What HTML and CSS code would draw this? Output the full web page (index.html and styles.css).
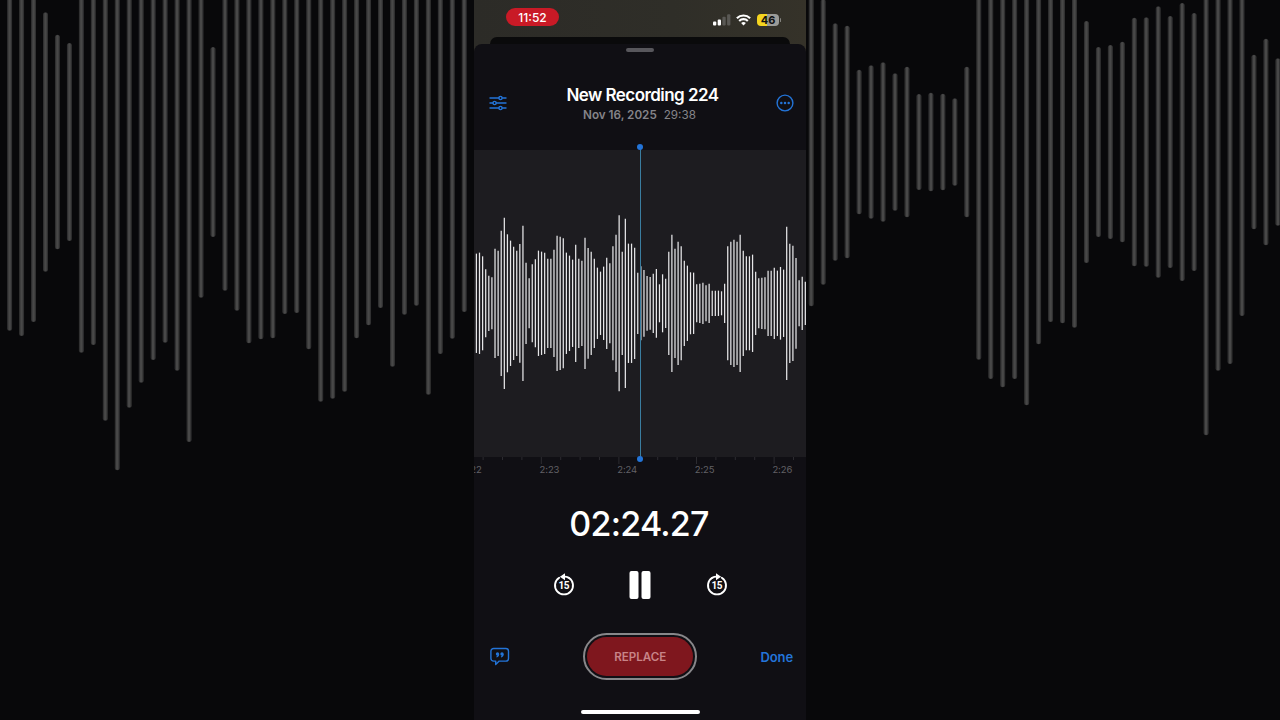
FILE: index.html
```html
<!DOCTYPE html>
<html lang="en">
<head>
  <meta charset="UTF-8" />
  <meta name="viewport" content="width=device-width, initial-scale=1.0" />
  <title>New Recording 224</title>
  <link rel="stylesheet" href="styles.css">
</head>
<body>
  <svg class="backdrop" id="backdrop" width="1280" height="720"></svg>

  <main class="phone">
    <header class="status-bar">
      <div class="clock">11:52</div>
      <div class="status-icons">
        <svg class="signal" width="18" height="12" viewBox="0 0 18 12">
          <rect x="0" y="7.5" width="3.3" height="4" rx="1" fill="#fff" />
          <rect x="4.7" y="5.5" width="3.3" height="6" rx="1" fill="#fff" />
          <rect x="9.4" y="2.8" width="3.3" height="8.7" rx="1" fill="#5a5955" />
          <rect x="14.1" y="0.3" width="3.3" height="11.2" rx="1" fill="#5a5955" />
        </svg>
        <svg class="wifi" width="15" height="12" viewBox="0 0 15 12">
          <path d="M0.9 4.2a9.4 9.4 0 0 1 13.2 0" fill="none" stroke="#fff" stroke-width="2.2" />
          <path d="M3.2 6.9a6.1 6.1 0 0 1 8.6 0" fill="none" stroke="#fff" stroke-width="2.1" />
          <path d="M5.1 9.1a3.4 3.4 0 0 1 4.8 0L7.5 11.6z" fill="#fff" />
        </svg>
        <div class="battery">46</div>
      </div>
    </header>

    <div class="sheet-behind"></div>

    <section class="sheet">
      <div class="grabber"></div>

      <div class="title-row">
        <svg width="18" height="16" viewBox="0 0 18 16" class="icon">
          <path d="M1 3h8.8M13.2 3H17M1 8h2.9M7.3 8H17M1 13h8.8M13.2 13H17" />
          <circle cx="11.5" cy="3" r="1.6" />
          <circle cx="5.6" cy="8" r="1.6" />
          <circle cx="11.5" cy="13" r="1.6" />
        </svg>
        <div class="title">
          <h1>New Recording 224</h1>
          <p><b>Nov 16, 2025</b><span>29:38</span></p>
        </div>
        <svg width="18" height="18" viewBox="0 0 18 18" class="icon">
          <circle cx="9" cy="9" r="7.9" />
          <g class="dots">
            <circle cx="5.3" cy="9" r="1.25" />
            <circle cx="9" cy="9" r="1.25" />
            <circle cx="12.7" cy="9" r="1.25" />
          </g>
        </svg>
      </div>

      <div class="waveform">
        <svg id="wave" width="332" height="307"></svg>
        <div class="playhead"></div>
      </div>

      <div class="ruler">
        <svg id="ticks" width="332" height="8"></svg>
        <div class="labels">
          <span>2:22</span><span>2:23</span><span>2:24</span><span>2:25</span><span>2:26</span>
        </div>
      </div>

      <div class="time">02:24.27</div>

      <div class="controls">
        <svg width="22" height="24" viewBox="0 0 22 24">
          <path d="M6.2 4.8A9 9 0 1 0 15.8 4.8" class="ring" />
          <path d="M6.9 3.8L12 0.3V7.3z" fill="#fff" />
          <path d="M11 3.7Q13.5 3.5 15.8 4.8" class="ring" />
          <text x="10.8" y="16.2">15</text>
        </svg>
        <svg width="22" height="28" viewBox="0 0 22 28">
          <rect x="0.5" y="0" width="9" height="28" rx="2" fill="#fff" />
          <rect x="12.5" y="0" width="9" height="28" rx="2" fill="#fff" />
        </svg>
        <svg width="22" height="24" viewBox="0 0 22 24">
          <path d="M6.2 4.8A9 9 0 1 0 15.8 4.8" class="ring" />
          <path d="M15.1 3.8L10 0.3V7.3z" fill="#fff" />
          <path d="M11 3.7Q8.5 3.5 6.2 4.8" class="ring" />
          <text x="10.8" y="16.2">15</text>
        </svg>
      </div>

      <div class="actions">
        <svg width="20" height="19" viewBox="0 0 20 19" class="icon">
          <path d="M3.6 1.5h12.2a2.7 2.7 0 0 1 2.7 2.7v7.2a2.7 2.7 0 0 1-2.7 2.7H9.2L5.7 17.4v-3.3H3.6a2.7 2.7 0 0 1-2.7-2.7V4.2a2.7 2.7 0 0 1 2.7-2.7z" />
          <g class="quotes">
            <circle cx="7.5" cy="7" r="1.7" />
            <circle cx="12" cy="7" r="1.7" />
            <path d="M9.2 6.9q0.1 2.9-2.6 3.5l-0.3-0.8q1.1-0.4 1.2-1.5zM13.7 6.9q0.1 2.9-2.6 3.5l-0.3-0.8q1.1-0.4 1.2-1.5z" />
          </g>
        </svg>
        <button class="replace"><span>REPLACE</span></button>
        <a class="done">Done</a>
      </div>

      <div class="home-bar"></div>
    </section>
  </main>

  <script src="script.js"></script>
</body>
</html>
```
FILE: styles.css
```css
* {
  box-sizing: border-box;
}
body {
  margin: 0;
  width: 1280px;
  height: 720px;
  overflow: hidden;
  background: #08080a;
  font-family: Inter, "Liberation Sans", sans-serif;
  color: #fff;
}
.backdrop {
  position: absolute;
  top: 0;
  left: 0;
}
.backdrop line {
  stroke: #303031;
  stroke-width: 5;
  stroke-linecap: round;
}
.backdrop line.core {
  stroke: #484848;
  stroke-width: 2.4;
}
.phone {
  position: relative;
  display: flex;
  flex-direction: column;
  width: 332px;
  height: 720px;
  margin: 0 auto;
  background: linear-gradient(90deg, #2c2b27, #2f2e28 60%, #353229);
}
.status-bar {
  display: flex;
  justify-content: space-between;
  height: 37px;
  padding: 8px 25px 0 32px;
}
.clock {
  width: 53px;
  height: 18px;
  border-radius: 9px;
  background: #c91a26;
  font-size: 12px;
  font-weight: 500;
  line-height: 19px;
  text-align: center;
}
.status-icons {
  display: flex;
  align-items: center;
  height: 23px;
}
.wifi {
  margin: 0 6px 0 5px;
}
.battery {
  position: relative;
  width: 22px;
  height: 12px;
  margin-right: 2px;
  border-radius: 4px;
  background: linear-gradient(90deg, #f5d51f 47%, #9b9b98 47%);
  color: #111;
  font-size: 11px;
  font-weight: 700;
  line-height: 12px;
  text-align: center;
}
.battery::after {
  content: "";
  position: absolute;
  top: 4px;
  right: -2px;
  width: 1px;
  height: 4px;
  border-radius: 1px;
  background: #84837f;
}
.sheet-behind {
  height: 7px;
  margin: 0 16px;
  border-radius: 7px 7px 0 0;
  background: #0a0a0b;
}
.sheet {
  display: flex;
  flex: 1;
  flex-direction: column;
  align-items: center;
  border-radius: 8px 8px 0 0;
  background: #100f14;
}
.grabber {
  width: 28px;
  height: 4px;
  margin-top: 4px;
  border-radius: 2px;
  background: #58575c;
}
.title-row {
  display: flex;
  justify-content: space-between;
  align-items: center;
  width: 100%;
  height: 98px;
  padding: 4px 12px 0 15px;
}
.icon {
  fill: none;
  stroke: #2374d8;
  stroke-width: 1.4;
  stroke-linecap: round;
  stroke-linejoin: round;
}
.dots, .quotes {
  fill: #2374d8;
  stroke: none;
}
.title {
  padding: 2px 0 0 2px;
  text-align: center;
}
.title h1 {
  margin: 0;
  font-size: 17px;
  font-weight: 600;
  line-height: 22px;
  letter-spacing: -0.55px;
}
.title p {
  margin: 0 6px 0 0;
  color: #858489;
  font-size: 11.7px;
  line-height: 18px;
}
.title b {
  margin-right: 7px;
  font-weight: 600;
}
.waveform {
  position: relative;
  width: 332px;
  height: 307px;
  background: #1d1c20;
}
#wave {
  display: block;
}
#wave line {
  stroke: #e6e6e8;
  stroke-width: 1.25;
}
.playhead {
  position: absolute;
  top: -3px;
  left: 166px;
  width: 1px;
  height: 312px;
  background: #3a7d9f;
}
.playhead::before, .playhead::after {
  content: "";
  position: absolute;
  left: -3px;
  width: 6px;
  height: 6px;
  border-radius: 50%;
  background: #2374d8;
}
.playhead::before {
  top: -3px;
}
.playhead::after {
  bottom: -3px;
}
.ruler {
  width: 332px;
  height: 31px;
  overflow: hidden;
}
#ticks {
  display: block;
}
#ticks line {
  stroke: #2c2b30;
  stroke-width: 1;
}
.labels {
  display: flex;
  margin-left: -12px;
  color: #626166;
  font-size: 9.5px;
  line-height: 10px;
  letter-spacing: -0.1px;
}
.labels span {
  flex: 0 0 77.6px;
}
.time {
  margin-top: 13px;
  font-size: 34px;
  font-weight: 500;
  line-height: 46px;
  letter-spacing: -0.75px;
  margin-right: 2px;
}
.controls {
  display: flex;
  align-items: center;
  justify-content: space-between;
  width: 175px;
  height: 40px;
  margin-top: 18px;
}
.ring {
  fill: none;
  stroke: #fff;
  stroke-width: 1.9;
  stroke-linecap: round;
}
.controls text {
  fill: #fff;
  font-family: Roboto, Inter, sans-serif;
  font-size: 10px;
  font-weight: 700;
  letter-spacing: -0.4px;
  text-anchor: middle;
}
.actions {
  display: flex;
  align-items: center;
  justify-content: space-between;
  width: 100%;
  height: 48px;
  margin-top: 27px;
  padding: 0 13px 0 16px;
}
.replace {
  width: 114px;
  height: 47px;
  margin-left: 10px;
  padding: 2px;
  border: 2px solid #88878a;
  border-radius: 24px;
  background: #100f14;
}
.replace span {
  display: block;
  height: 39px;
  border-radius: 20px;
  background: #7f171e;
  color: #c88488;
  font-family: Inter, "Liberation Sans", sans-serif;
  font-size: 11.6px;
  font-weight: 600;
  line-height: 40px;
}
.done {
  padding-top: 1px;
  color: #2374d8;
  font-size: 13px;
  font-weight: 600;
  letter-spacing: -0.1px;
}
.home-bar {
  width: 119px;
  height: 4px;
  margin-top: 30px;
  border-radius: 2px;
  background: #fff;
}
```
FILE: script.js
```js
const SVG_NS = "http://www.w3.org/2000/svg";

function addLine(svg, x, y1, y2, className) {
  const line = document.createElementNS(SVG_NS, "line");
  line.setAttribute("x1", x);
  line.setAttribute("x2", x);
  line.setAttribute("y1", y1);
  line.setAttribute("y2", y2);
  if (className) line.setAttribute("class", className);
  svg.appendChild(line);
}

// half heights of the bars, in thirds of a pixel
const samples = [
  149, 152, 141, 102, 83, 78, 164, 158, 218, 257, 207, 188, 170, 158, 178, 233, 122, 75,
  117, 132, 158, 155, 152, 134, 134, 161, 203, 200, 195, 152, 143, 131, 176, 134, 128, 197,
  166, 155, 134, 107, 95, 110, 137, 120, 171, 206, 264, 155, 254, 179, 179, 167, 92, 111,
  100, 82, 79, 89, 103, 57, 87, 74, 155, 206, 164, 185, 171, 128, 113, 93, 92, 57, 59, 62,
  54, 59, 38, 38, 38, 36, 59, 171, 185, 191, 185, 206, 158, 141, 141, 146, 95, 75, 77, 78,
  98, 98, 107, 98, 109, 101, 230, 179, 173, 136, 69, 80, 65
];
const wave = document.getElementById("wave");
samples.forEach((s, i) => {
  addLine(wave, 2.4 + i * 3.103, 153.3 - s / 3, 153.3 + s / 3);
});

// enlarged bars on both sides of the phone
const left = [
  992, 1008, 966, 815, 748, 723, 1058, 1035, 1262, 1411, 1223, 1148, 1080, 1028, 1112, 1326,
  893, 711, 872, 932, 1030, 1018, 1015, 942, 939, 1048, 1205, 1196, 1175, 1015, 976, 924,
  1100, 944, 917, 1184, 1062, 1016, 936
];
const right = [
  919, 854, 782, 775, 643, 656, 665, 632, 652, 570, 574, 571, 557, 652, 1079, 1137, 1162,
  1137, 1216, 1033, 966, 970, 983, 789, 711, 717, 727, 799, 800, 833, 804, 843, 813, 1306,
  1112, 1092, 948, 688, 736, 677
];
const backdrop = document.getElementById("backdrop");
function addSide(bars, first) {
  bars.forEach((b, i) => {
    const x = 9.6 + (first + i) * 11.965;
    addLine(backdrop, x, 286.5 - b / 3, b / 3 - 2.5);
    addLine(backdrop, x, 285.5 - b / 3, b / 3 - 1.5, "core");
  });
}
addSide(left, 0);
addSide(right, 67);

// four ticks per second, the full second is longer
const ticks = document.getElementById("ticks");
for (let i = -3; i < 14; i++) {
  addLine(ticks, 67.3 + i * 19.4, 0, i % 4 === 0 ? 7 : 3);
}
```
